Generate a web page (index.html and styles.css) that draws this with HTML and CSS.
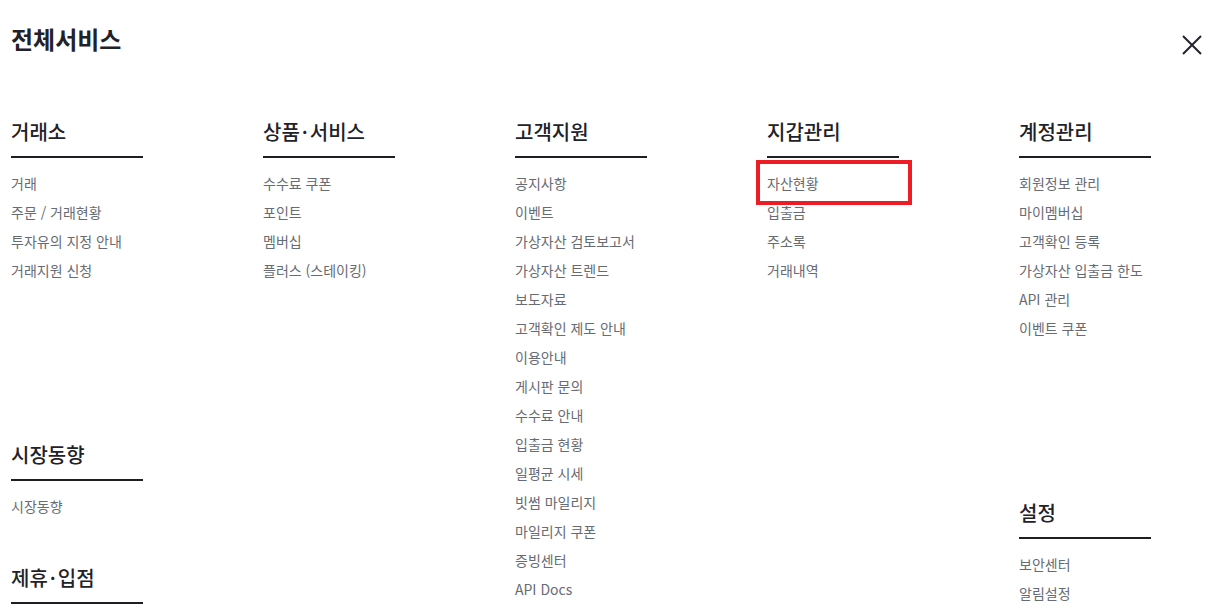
FILE: index.html
```html
<!DOCTYPE html>
<html lang="ko">
<head>
<meta charset="utf-8">
<title>전체서비스</title>
<link rel="stylesheet" href="styles.css">
</head>
<body>
<div class="panel">
  <header class="panel-head">
    <h1 class="panel-title">전체서비스</h1>
    <button class="close-btn" type="button" aria-label="닫기">
      <svg width="22" height="22" viewBox="0 0 22 22" aria-hidden="true">
        <path d="M2 2 L20 20 M20 2 L2 20" stroke="#222429" stroke-width="2" fill="none"/>
      </svg>
    </button>
  </header>
  <div class="menu-grid">
    <div class="menu-col">
      <section class="group">
        <h2 class="group-title">거래소</h2>
        <ul class="links">
          <li>거래</li>
          <li>주문 / 거래현황</li>
          <li>투자유의 지정 안내</li>
          <li>거래지원 신청</li>
        </ul>
      </section>
      <section class="group group-tight">
        <h2 class="group-title">시장동향</h2>
        <ul class="links">
          <li>시장동향</li>
        </ul>
      </section>
      <section class="group">
        <h2 class="group-title">제휴<span class="dot">·</span>입점</h2>
      </section>
    </div>
    <div class="menu-col">
      <section class="group">
        <h2 class="group-title">상품<span class="dot">·</span>서비스</h2>
        <ul class="links">
          <li>수수료 쿠폰</li>
          <li>포인트</li>
          <li>멤버십</li>
          <li>플러스 (스테이킹)</li>
        </ul>
      </section>
    </div>
    <div class="menu-col">
      <section class="group">
        <h2 class="group-title">고객지원</h2>
        <ul class="links">
          <li>공지사항</li>
          <li>이벤트</li>
          <li>가상자산 검토보고서</li>
          <li>가상자산 트렌드</li>
          <li>보도자료</li>
          <li>고객확인 제도 안내</li>
          <li>이용안내</li>
          <li>게시판 문의</li>
          <li>수수료 안내</li>
          <li>입출금 현황</li>
          <li>일평균 시세</li>
          <li>빗썸 마일리지</li>
          <li>마일리지 쿠폰</li>
          <li>증빙센터</li>
          <li>API Docs</li>
        </ul>
      </section>
    </div>
    <div class="menu-col">
      <section class="group">
        <h2 class="group-title">지갑관리</h2>
        <ul class="links">
          <li class="is-highlighted">자산현황</li>
          <li>입출금</li>
          <li>주소록</li>
          <li>거래내역</li>
        </ul>
      </section>
    </div>
    <div class="menu-col">
      <section class="group">
        <h2 class="group-title">계정관리</h2>
        <ul class="links">
          <li>회원정보 관리</li>
          <li>마이멤버십</li>
          <li>고객확인 등록</li>
          <li>가상자산 입출금 한도</li>
          <li>API 관리</li>
          <li>이벤트 쿠폰</li>
        </ul>
      </section>
      <section class="group">
        <h2 class="group-title">설정</h2>
        <ul class="links">
          <li>보안센터</li>
          <li>알림설정</li>
        </ul>
      </section>
    </div>
  </div>
</div>
</body>
</html>
```

FILE: styles.css
```css
*, *::before, *::after { box-sizing: border-box; }
html, body { margin: 0; padding: 0; background: #ffffff; }
body {
  font-family: "Noto Sans CJK KR", "Noto Sans", sans-serif;
  color: #1f2228;
  overflow: hidden;
  height: 611px;
}
.panel {
  position: relative;
  padding: 24px 0 0 11px;
}
.panel-head {
  height: 31px;
}
.panel-title {
  margin: 0;
  font-size: 24px;
  line-height: 30px;
  font-weight: 700;
  color: #1f2228;
}
.close-btn {
  position: absolute;
  top: 34px;
  left: 1181px;
  width: 22px;
  height: 22px;
  padding: 0;
  border: 0;
  background: none;
  display: block;
}
.close-btn svg { display: block; }
.menu-grid {
  margin-top: 64px;
  display: grid;
  grid-template-columns: repeat(5, 252px);
}
.menu-col {
  display: flex;
  flex-direction: column;
}
.group {
  width: 132px;
  margin-bottom: 157px;
}
.group:last-child { margin-bottom: 0; }
.group-tight { margin-bottom: 44px; }
.group-title {
  margin: 0;
  font-size: 20px;
  line-height: 26px;
  font-weight: 500;
  color: #1f2228;
  padding-bottom: 11px;
  border-bottom: 2px solid #1d1f25;
  white-space: nowrap;
}
.dot { margin: 0 2px; }
.links {
  list-style: none;
  margin: 0;
  padding: 11px 0 0;
}
.links li {
  position: relative;
  font-size: 14px;
  line-height: 29px;
  color: #676b74;
  white-space: nowrap;
}
.links li.is-highlighted::after {
  content: "";
  position: absolute;
  top: -9px;
  left: -11px;
  width: 156px;
  height: 45px;
  border: 4px solid #ee1c25;
}
```
